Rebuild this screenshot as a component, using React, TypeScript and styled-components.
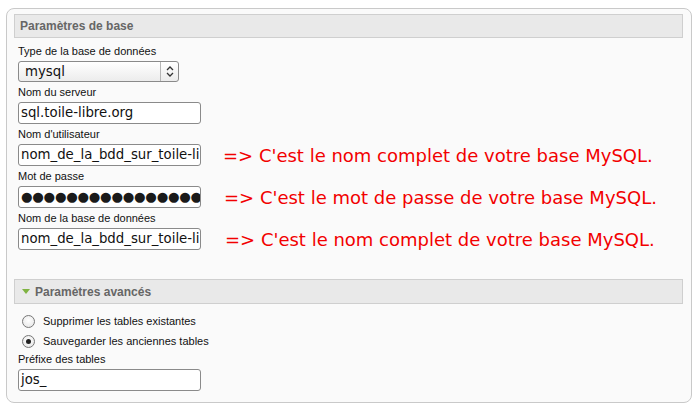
import React from "react";
import styled, { createGlobalStyle } from "styled-components";

const GlobalStyle = createGlobalStyle`
  html, body {
    margin: 0;
    padding: 0;
    background: #ffffff;
  }
  body {
    font-family: "Liberation Sans", Arial, sans-serif;
  }
`;

const Page = styled.div`
  padding: 8px 4px 3px 6px;
`;

const Panel = styled.div`
  box-sizing: border-box;
  width: 686px;
  height: 395px;
  border: 1px solid #c9c9c9;
  border-radius: 8px;
  background: #fafafa;
  padding: 5px 8px 0 7px;
`;

const SectionHeader = styled.div<{ $gap?: number; $h?: number }>`
  box-sizing: border-box;
  height: ${(p) => p.$h ?? 24}px;
  margin-top: ${(p) => p.$gap ?? 0}px;
  border: 1px solid #cfcfcf;
  background: #e9e9e9;
  display: flex;
  align-items: center;
  gap: 5px;
  padding-left: 5px;
  font-size: 12px;
  font-weight: bold;
  color: #666;
`;

const Triangle = styled.span`
  display: inline-block;
  width: 0;
  height: 0;
  margin-left: 2px;
  border-left: 4px solid transparent;
  border-right: 4px solid transparent;
  border-top: 5px solid #7fb342;
`;

const Form = styled.div`
  padding-left: 4px;
`;

const Label = styled.div<{ $top?: number }>`
  font-size: 11px;
  line-height: 13px;
  color: #111;
  margin-top: ${(p) => p.$top ?? 4}px;
  margin-bottom: 3px;
`;

const Row = styled.div`
  display: flex;
  align-items: center;
`;

const Input = styled.div`
  box-sizing: border-box;
  width: 183px;
  height: 22px;
  border: 1px solid #8a8a8a;
  border-radius: 3px;
  background: #fff;
  padding: 0 2px;
  font-family: "DejaVu Sans", Verdana, sans-serif;
  font-size: 13.3px;
  line-height: 20px;
  color: #111;
  white-space: nowrap;
  overflow: hidden;
`;

const Dots = styled.span`
  color: #1a1a1a;
  letter-spacing: -0.3px;
`;

const Select = styled.div`
  box-sizing: border-box;
  width: 161px;
  height: 21px;
  border: 1px solid #8a8a8a;
  border-radius: 3px;
  background: linear-gradient(#ffffff, #ececec);
  display: flex;
  align-items: stretch;
  font-family: "DejaVu Sans", Verdana, sans-serif;
  font-size: 13.3px;
  color: #111;
`;

const SelectValue = styled.span`
  flex: 1;
  padding-left: 6px;
  line-height: 19px;
`;

const SelectArrow = styled.span`
  width: 17px;
  border-left: 1px solid #b5b5b5;
  display: flex;
  align-items: center;
  justify-content: center;
`;

const Note = styled.span<{ $shift?: number }>`
  margin-left: ${(p) => 22 + (p.$shift ?? 0)}px;
  font-family: "DejaVu Sans", Verdana, sans-serif;
  font-size: 18px;
  color: #f20000;
  white-space: nowrap;
`;

const Radios = styled.div`
  padding-top: 11px;
  display: flex;
  flex-direction: column;
  gap: 7px;
`;

const RadioRow = styled.div`
  display: flex;
  align-items: center;
  gap: 8px;
  padding-left: 4px;
  font-size: 11px;
  line-height: 13px;
  color: #111;
  height: 13px;
`;

const RadioCircle = styled.span<{ $checked?: boolean }>`
  box-sizing: border-box;
  width: 13px;
  height: 13px;
  border-radius: 50%;
  border: 1px solid #777;
  background: radial-gradient(circle at 50% 40%, #ffffff, #e3e3e3);
  display: flex;
  align-items: center;
  justify-content: center;
  &::after {
    content: "";
    width: 5px;
    height: 5px;
    border-radius: 50%;
    background: ${(p) => (p.$checked ? "#222" : "transparent")};
  }
`;

const Chevrons = () => (
  <svg width="8" height="11" viewBox="0 0 8 11" fill="none" stroke="#333" strokeWidth="1.3">
    <path d="M1 4 L4 1 L7 4" />
    <path d="M1 7 L4 10 L7 7" />
  </svg>
);

const fields = [
  { label: "Nom d'utilisateur", value: "nom_de_la_bdd_sur_toile-libre", note: "=> C'est le nom complet de votre base MySQL.", shift: 0 },
  { label: "Mot de passe", value: "", note: "=> C'est le mot de passe de votre base MySQL.", shift: 1 },
  { label: "Nom de la base de données", value: "nom_de_la_bdd_sur_toile-libre", note: "=> C'est le nom complet de votre base MySQL.", shift: 2 },
];

export default function App() {
  return (
    <>
      <GlobalStyle />
      <Page>
        <Panel>
          <SectionHeader>Paramètres de base</SectionHeader>
          <Form>
            <Label $top={7}>Type de la base de données</Label>
            <Select>
              <SelectValue>mysql</SelectValue>
              <SelectArrow>
                <Chevrons />
              </SelectArrow>
            </Select>
            <Label>Nom du serveur</Label>
            <Input>sql.toile-libre.org</Input>
            {fields.map((f) => (
              <React.Fragment key={f.label}>
                <Label>{f.label}</Label>
                <Row>
                  <Input>
                    {f.value ? f.value : <Dots>●●●●●●●●●●●●●●●●</Dots>}
                  </Input>
                  <Note $shift={f.shift}>{f.note}</Note>
                </Row>
              </React.Fragment>
            ))}
          </Form>
          <SectionHeader $gap={29} $h={25}>
            <Triangle />
            Paramètres avancés
          </SectionHeader>
          <Form>
            <Radios>
              <RadioRow>
                <RadioCircle />
                Supprimer les tables existantes
              </RadioRow>
              <RadioRow>
                <RadioCircle $checked />
                Sauvegarder les anciennes tables
              </RadioRow>
            </Radios>
            <Label $top={5}>Préfixe des tables</Label>
            <Input>jos_</Input>
          </Form>
        </Panel>
      </Page>
    </>
  );
}
